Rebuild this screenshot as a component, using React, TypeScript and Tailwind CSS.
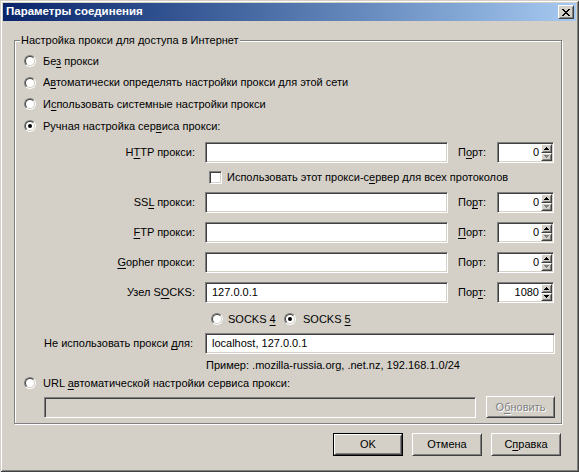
import type { ReactNode } from "react";

const sunken =
  "border border-t-[#808080] border-l-[#808080] border-r-white border-b-white shadow-[inset_1px_1px_0_#404040,inset_-1px_-1px_0_#d4d0c8]";
const raised =
  "border border-t-white border-l-white border-r-[#404040] border-b-[#404040] shadow-[inset_1px_1px_0_#d4d0c8,inset_-1px_-1px_0_#808080]";

// access key underline
function K({ children }: { children: ReactNode }) {
  return <span className="underline underline-offset-[2px]">{children}</span>;
}

function Radio({ checked }: { checked?: boolean }) {
  return (
    <span className="block w-[12px] h-[12px] shrink-0 rounded-full border border-t-[#808080] border-l-[#808080] border-r-white border-b-white">
      <span className="flex items-center justify-center w-full h-full rounded-full border border-t-[#404040] border-l-[#404040] border-r-[#d4d0c8] border-b-[#d4d0c8] bg-white">
        {checked && <span className="block w-[4px] h-[4px] rounded-full bg-black" />}
      </span>
    </span>
  );
}

function Arrow({ up, off }: { up?: boolean; off?: boolean }) {
  const c = off ? "#808080" : "#000";
  return (
    <svg width="5" height="3" viewBox="0 0 5 3" shapeRendering="crispEdges">
      {up ? (
        <>
          <rect x="2" y="0" width="1" height="1" fill={c} />
          <rect x="1" y="1" width="3" height="1" fill={c} />
          <rect x="0" y="2" width="5" height="1" fill={c} />
        </>
      ) : (
        <>
          <rect x="0" y="0" width="5" height="1" fill={c} />
          <rect x="1" y="1" width="3" height="1" fill={c} />
          <rect x="2" y="2" width="1" height="1" fill={c} />
        </>
      )}
    </svg>
  );
}

function Spin({ value, min = true }: { value: string; min?: boolean }) {
  return (
    <div className={`flex w-[57px] h-[21px] p-[1px] bg-white ${sunken}`}>
      <div className="flex-1 flex items-center justify-end pr-[2px]">{value}</div>
      <div className="flex flex-col w-[11px]">
        <div className={`flex-1 flex items-center justify-center bg-[#d4d0c8] ${raised}`}>
          <Arrow up />
        </div>
        <div className={`flex-1 flex items-center justify-center bg-[#d4d0c8] ${raised}`}>
          <Arrow off={min} />
        </div>
      </div>
    </div>
  );
}

function ProxyRow({
  label,
  value = "",
  port,
  portLabel,
  min,
  className = "",
}: {
  label: ReactNode;
  value?: string;
  port: string;
  portLabel: ReactNode;
  min?: boolean;
  className?: string;
}) {
  return (
    <div className={`flex items-center h-[21px] ${className}`}>
      <div className="w-[181px] pr-[1px] text-right">{label}</div>
      <div className={`ml-[9px] w-[243px] h-[21px] pl-[6px] flex items-center bg-white ${sunken}`}>{value}</div>
      <div className="w-[49px] pl-[10px]">{portLabel}</div>
      <Spin value={port} min={min} />
    </div>
  );
}

function Button({ children, isDefault }: { children: ReactNode; isDefault?: boolean }) {
  return (
    <div className={`w-[70px] h-[23px] ${isDefault ? "border border-black" : ""}`}>
      <div className={`w-full h-full flex items-center justify-center bg-[#d4d0c8] ${raised}`}>{children}</div>
    </div>
  );
}

export default function App() {
  return (
    <div className="w-[579px] h-[472px] bg-[#d4d0c8] text-black text-[11px] leading-none font-['Liberation_Sans',sans-serif] flex flex-col shadow-[inset_1px_1px_0_#d4d0c8,inset_-1px_-1px_0_#404040,inset_2px_2px_0_#ffffff,inset_-2px_-2px_0_#808080]">
      {/* title bar */}
      <div className="mx-[3px] mt-[3px] h-[18px] flex items-center justify-between bg-linear-to-r from-[#0a246a] to-[#a6caf0]">
        <span className="pl-[3px] font-bold text-white text-[11.5px]">Параметры соединения</span>
        <div className={`mr-[2px] w-[16px] h-[14px] flex items-center justify-center bg-[#d4d0c8] ${raised}`}>
          <svg width="8" height="7" viewBox="0 0 8 7" shapeRendering="crispEdges">
            <path
              fill="#000"
              d="M0 0h2v1H0zM6 0h2v1H6zM1 1h2v1H1zM5 1h2v1H5zM2 2h4v1H2zM3 3h2v1H3zM2 4h4v1H2zM1 5h2v1H1zM5 5h2v1H5zM0 6h2v1H0zM6 6h2v1H6z"
            />
          </svg>
        </div>
      </div>

      {/* group box */}
      <div className="relative mt-[19px] ml-[14px] w-[548px] h-[384px] border border-[#808080] shadow-[inset_1px_1px_0_#fff,1px_1px_0_#fff]">
        <span className="absolute left-[5px] top-[-6px] px-[1px] bg-[#d4d0c8]">
          Настройка прокси для доступа в Интернет
        </span>

        <div className="flex flex-col pt-[9px]">
          <div className="flex items-center h-[22px] pl-[9px] gap-[7px]">
            <Radio />
            <span>
              Бе<K>з</K> прокси
            </span>
          </div>
          <div className="flex items-center h-[21px] pl-[9px] gap-[7px]">
            <Radio />
            <span>
              А<K>в</K>томатически определять настройки прокси для этой сети
            </span>
          </div>
          <div className="flex items-center h-[22px] pl-[9px] gap-[7px]">
            <Radio />
            <span>
              И<K>с</K>пользовать системные настройки прокси
            </span>
          </div>
          <div className="flex items-center h-[22px] pl-[9px] gap-[7px]">
            <Radio checked />
            <span>
              Ручная настройка сер<K>в</K>иса прокси:
            </span>
          </div>

          <ProxyRow
            className="mt-[5px]"
            label={
              <>
                H<K>T</K>TP прокси:
              </>
            }
            portLabel={
              <>
                П<K>о</K>рт:
              </>
            }
            port="0"
            min
          />

          <div className="flex items-center h-[29px] pl-[194px] gap-[5px]">
            <span className={`block w-[13px] h-[13px] bg-white ${sunken}`} />
            <span>
              Использовать этот прокси-с<K>е</K>рвер для всех протоколов
            </span>
          </div>

          <ProxyRow
            label={
              <>
                SS<K>L</K> прокси:
              </>
            }
            portLabel={
              <>
                По<K>р</K>т:
              </>
            }
            port="0"
            min
          />
          <ProxyRow
            className="mt-[9px]"
            label={
              <>
                <K>F</K>TP прокси:
              </>
            }
            portLabel={
              <>
                <K>П</K>орт:
              </>
            }
            port="0"
            min
          />
          <ProxyRow
            className="mt-[9px]"
            label={
              <>
                <K>G</K>opher прокси:
              </>
            }
            portLabel="Порт:"
            port="0"
            min
          />
          <ProxyRow
            className="mt-[9px]"
            label={
              <>
                Узел S<K>O</K>CKS:
              </>
            }
            value="127.0.0.1"
            portLabel={
              <>
                Пор<K>т</K>:
              </>
            }
            port="1080"
            min={false}
          />

          <div className="flex items-center h-[20px] mt-[6px] pl-[196px]">
            <div className="flex items-center gap-[5px] w-[73px]">
              <Radio />
              <span>
                SOCKS <K>4</K>
              </span>
            </div>
            <div className="flex items-center gap-[7px]">
              <Radio checked />
              <span>
                SOCKS <K>5</K>
              </span>
            </div>
          </div>

          <div className="flex items-center h-[21px] mt-[4px]">
            <div className="w-[181px] pr-[3px] text-right">
              Не использовать прокси <K>д</K>ля:
            </div>
            <div className={`ml-[9px] w-[350px] h-[21px] pl-[6px] flex items-center bg-white ${sunken}`}>
              localhost, 127.0.0.1
            </div>
          </div>

          <div className="flex items-center h-[22px] pl-[191px]">
            Пример: .mozilla-russia.org, .net.nz, 192.168.1.0/24
          </div>

          <div className="flex items-center h-[14px] pl-[9px] gap-[7px]">
            <Radio />
            <span>
              URL <K>а</K>втоматической настройки сервиса прокси:
            </span>
          </div>

          <div className="flex items-center h-[22px] mt-[6px] pl-[29px]">
            <div className={`w-[432px] h-[21px] bg-[#d4d0c8] ${sunken}`} />
            <div
              className={`ml-[10px] w-[69px] h-[22px] flex items-center justify-center bg-[#d4d0c8] text-[#808080] [text-shadow:1px_1px_0_#fff] ${raised}`}
            >
              О<K>б</K>новить
            </div>
          </div>
        </div>
      </div>

      {/* buttons */}
      <div className="mt-[9px] flex justify-end gap-[9px] pr-[18px]">
        <Button isDefault>OK</Button>
        <Button>Отмена</Button>
        <Button>
          С<K>п</K>равка
        </Button>
      </div>
    </div>
  );
}
